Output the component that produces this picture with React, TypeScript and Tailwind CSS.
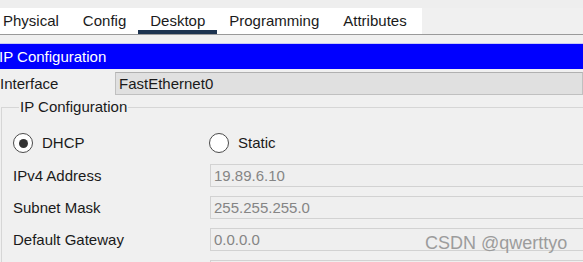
import React from "react";

const tabs = ["Physical", "Config", "Desktop", "Programming", "Attributes"];

function Radio({ checked }: { checked?: boolean }) {
  return (
    <span className="flex h-[20px] w-[20px] shrink-0 items-center justify-center rounded-full border-[1.5px] border-[#4a4a4a] bg-white">
      {checked && <span className="h-[9px] w-[9px] rounded-full bg-[#333333]" />}
    </span>
  );
}

function Field({ label, value }: { label: string; value: string }) {
  return (
    <div className="flex h-[23px] items-center">
      <div className="w-[197px] shrink-0 text-[#1a1a1a]">{label}</div>
      <div className="flex h-[23px] flex-1 items-center border border-[#d2d2d2] bg-[#efefef] pl-[3px] text-[#858585]">
        {value}
      </div>
    </div>
  );
}

export default function App() {
  return (
    <div
      className="relative h-[262px] w-[583px] overflow-hidden bg-[#f0f0f0] text-[15px] leading-[18px]"
      style={{ fontFamily: '"Liberation Sans", Arial, sans-serif' }}
    >
      <div className="h-[8px] bg-[#eeeeee]" />
      <div className="flex h-[27px] border-b border-[#9a9a9a]">
        <div className="flex h-[26px] w-[422px] bg-white">
          {tabs.map((t, i) => (
            <div
              key={t}
              className={
                "flex h-[26px] items-center text-[#1a1a1a] " +
                (i === 0 ? "pl-[3px] pr-[12px] " : "px-[12px] ") +
                (t === "Desktop" ? "border-b-4 border-[#1c3350] pt-[4px]" : "")
              }
            >
              {t}
            </div>
          ))}
        </div>
      </div>
      <div className="h-[8px]" />
      <div className="h-[1px] bg-[#c8c8f4]" />
      <div className="flex h-[25px] items-center bg-[#0000ff] text-white">
        <span className="-ml-[1px]">IP Configuration</span>
      </div>
      <div className="mt-[3px] flex h-[23px] items-center">
        <div className="w-[115px] shrink-0 text-[#1a1a1a]">Interface</div>
        <div className="flex h-[23px] flex-1 items-center border border-[#c0c0c0] border-t-[#b0b0b0] bg-[#e0e0e0] pl-[3px] text-[#1a1a1a]">
          FastEthernet0
        </div>
      </div>
      <fieldset className="ml-[1px] mt-[3px] w-[640px] border-l border-t border-[#d6d6d6] pl-[11px]">
        <legend className="ml-[6px] px-[1px] text-[#1a1a1a]">IP Configuration</legend>
        <div className="mt-[17px] flex h-[20px] items-center">
          <div className="flex w-[196px] items-center gap-[9px]">
            <Radio checked />
            <span className="text-[#1a1a1a]">DHCP</span>
          </div>
          <div className="flex items-center gap-[9px]">
            <Radio />
            <span className="text-[#1a1a1a]">Static</span>
          </div>
        </div>
        <div className="mt-[11px] flex flex-col gap-[9px]">
          <Field label="IPv4 Address" value="19.89.6.10" />
          <Field label="Subnet Mask" value="255.255.255.0" />
          <Field label="Default Gateway" value="0.0.0.0" />
          <Field label="" value="" />
        </div>
      </fieldset>
      <div className="absolute left-[425px] top-[234px] text-[18px] leading-none text-[#9c9c9c]">
        CSDN @qwerttyo
      </div>
    </div>
  );
}
